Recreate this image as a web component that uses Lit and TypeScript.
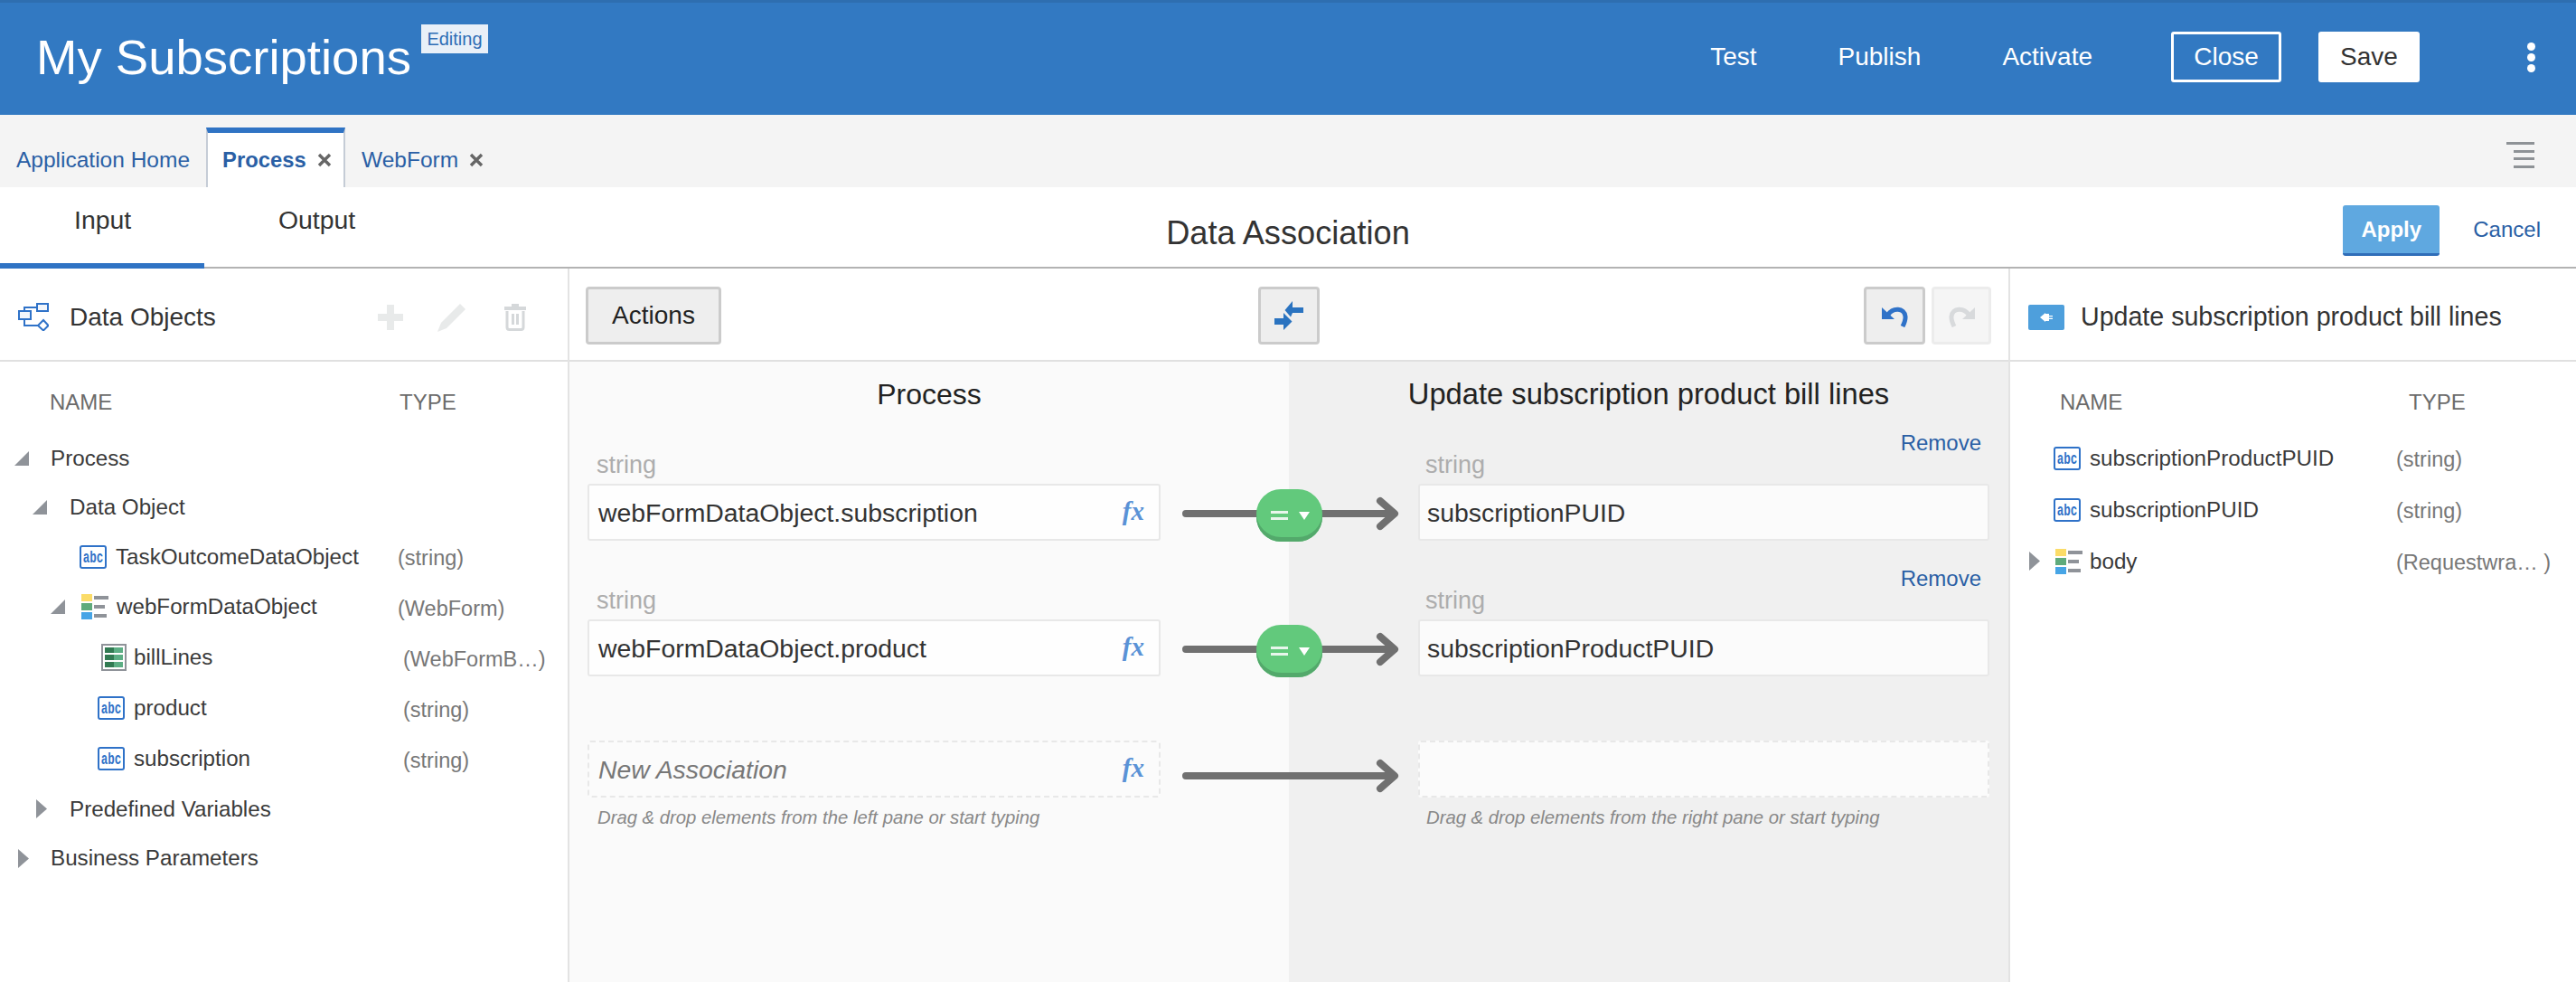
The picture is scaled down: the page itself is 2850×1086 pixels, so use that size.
import { LitElement, html, css, svg } from "lit";
import { customElement } from "lit/decorators.js";

interface TreeRow {
  label: string;
  type?: string;
  typeX?: number;
  caret?: "open" | "closed";
  caretX?: number;
  icon?: "abc" | "list" | "grid";
  iconX?: number;
  textX: number;
  h: number;
}

const LEFT_TREE: TreeRow[] = [
  { label: "Process", caret: "open", caretX: 16, textX: 56, h: 54 },
  { label: "Data Object", caret: "open", caretX: 36, textX: 77, h: 54 },
  { label: "TaskOutcomeDataObject", type: "(string)", typeX: 440, icon: "abc", iconX: 88, textX: 128, h: 55 },
  { label: "webFormDataObject", type: "(WebForm)", typeX: 440, caret: "open", caretX: 56, icon: "list", iconX: 90, textX: 129, h: 56 },
  { label: "billLines", type: "(WebFormB…)", typeX: 446, icon: "grid", iconX: 112, textX: 148, h: 56 },
  { label: "product", type: "(string)", typeX: 446, icon: "abc", iconX: 108, textX: 148, h: 56 },
  { label: "subscription", type: "(string)", typeX: 446, icon: "abc", iconX: 108, textX: 148, h: 56 },
  { label: "Predefined Variables", caret: "closed", caretX: 40, textX: 77, h: 55 },
  { label: "Business Parameters", caret: "closed", caretX: 20, textX: 56, h: 54 },
];

const RIGHT_TREE: TreeRow[] = [
  { label: "subscriptionProductPUID", type: "(string)", typeX: 427, icon: "abc", iconX: 48, textX: 88, h: 57 },
  { label: "subscriptionPUID", type: "(string)", typeX: 427, icon: "abc", iconX: 48, textX: 88, h: 57 },
  { label: "body", type: "(Requestwra… )", typeX: 427, caret: "closed", caretX: 21, icon: "list", iconX: 50, textX: 88, h: 57 },
];

const abcIcon = html`<svg width="30" height="26" viewBox="0 0 30 26">
  <rect x="1" y="1" width="28" height="24" rx="2" fill="#fff" stroke="#2f72c8" stroke-width="2"></rect>
  <text transform="translate(15 19) scale(1 1.5)" text-anchor="middle"
    font-family="Liberation Mono, monospace" font-weight="700" font-size="12.500" fill="#2f72c8">abc</text>
</svg>`;

const listIcon = html`<svg width="30" height="28" viewBox="0 0 30 28">
  <rect x="0" y="0" width="12" height="8" fill="#fbdc68"></rect>
  <rect x="0" y="10" width="12" height="8" fill="#5fab7c"></rect>
  <rect x="0" y="20" width="12" height="8" fill="#47a5e6"></rect>
  <rect x="14" y="2" width="16" height="4" fill="#8f9399"></rect>
  <rect x="14" y="12" width="12" height="4" fill="#8f9399"></rect>
  <rect x="14" y="22" width="14" height="4" fill="#8f9399"></rect>
</svg>`;

const gridIcon = html`<svg width="28" height="30" viewBox="0 0 28 30">
  <rect x="1" y="1" width="26" height="28" fill="#fff" stroke="#8f9399" stroke-width="2"></rect>
  ${[4, 12, 20].map(
    (y) => svg`<rect x="4" y=${y} width="10" height="6" fill="#317a52"></rect>
      <rect x="14" y=${y} width="10" height="6" fill="#5cae84"></rect>`,
  )}
</svg>`;

const icons = { abc: abcIcon, list: listIcon, grid: gridIcon };

const caretOpen = html`<svg width="16" height="16" viewBox="0 0 16 16"><path d="M16 0V16H0Z" fill="#8f9399"></path></svg>`;
const caretClosed = html`<svg width="12" height="21" viewBox="0 0 12 21"><path d="M0 0L12 10.5L0 21Z" fill="#8f9399"></path></svg>`;

const closeX = html`<svg class="x" width="16" height="16" viewBox="0 0 16 16">
  <path d="M2 2L14 14M14 2L2 14" stroke="#666" stroke-width="3.4" fill="none"></path>
</svg>`;

const undoShape = (fill: string) => svg`
  <path d="M7 12C12 4 25 4 26 14C26.400 18 25 21 23 25" fill="none" stroke=${fill} stroke-width="5"></path>
  <path d="M0 4V17H14Z" fill=${fill}></path>`;

function arrow(y: number) {
  return html`<svg class="arrow" width="285" height="63" viewBox="0 0 285 63">
    <path d="M28 ${y}H255M243 ${y - 14}L259 ${y}L243 ${y + 14}" fill="none" stroke="#707070" stroke-width="8"
      stroke-linecap="round" stroke-linejoin="round"></path>
  </svg>`;
}

function renderTree(rows: TreeRow[]) {
  return rows.map((r) => {
    const start = r.caretX ?? r.iconX ?? r.textX;
    const afterCaret = r.iconX ?? r.textX;
    return html`<div class="row" style="height:${r.h}px;padding-left:${start}px">
      <div class="name" style="width:${(r.typeX ?? 600) - start}px">
        ${r.caret
          ? html`<span class="slot" style="width:${afterCaret - start}px">${r.caret === "open" ? caretOpen : caretClosed}</span>`
          : ""}
        ${r.icon ? html`<span class="slot" style="width:${r.textX - (r.iconX ?? 0)}px">${icons[r.icon]}</span>` : ""}
        <span>${r.label}</span>
      </div>
      ${r.type ? html`<span class="type">${r.type}</span>` : ""}
    </div>`;
  });
}

@customElement("app-root")
export class AppRoot extends LitElement {
  static styles = css`
    :host {
      display: flex;
      flex-direction: column;
      height: 1086px;
      overflow: hidden;
      background: #fff;
      color: #333;
      font-family: "Liberation Sans", Arial, sans-serif;
    }

    .app-header {
      height: 127px;
      flex: none;
      box-sizing: border-box;
      display: flex;
      align-items: center;
      padding: 0 45px 4px 40px;
      background: #3279c2;
      border-top: 3px solid #2e6eb0;
      color: #fff;
    }
    .title {
      font-size: 54.500px;
      margin-top: 0;
    }
    .badge {
      align-self: flex-start;
      margin: 24px 0 0 11px;
      height: 32px;
      width: 74px;
      box-sizing: border-box;
      background: #e9f0f8;
      color: #2f6db5;
      font-size: 20px;
      line-height: 32px;
      text-align: center;
    }
    .actions {
      margin-left: auto;
      display: flex;
      align-items: center;
      font-size: 28px;
    }
    .actions .link {
      margin-right: 90px;
    }
    .actions .link:nth-child(3) {
      margin-right: 87px;
    }
    .btn-head {
      box-sizing: border-box;
      height: 56px;
      line-height: 50px;
      border: 3px solid #fff;
      border-radius: 3px;
      text-align: center;
    }
    .btn-close {
      width: 122px;
    }
    .btn-save {
      width: 112px;
      margin-left: 41px;
      background: #fff;
      color: #333;
    }
    .kebab {
      margin-left: 119px;
      display: flex;
      flex-direction: column;
      gap: 3px;
    }
    .kebab i {
      width: 9px;
      height: 9px;
      border-radius: 50%;
      background: #fff;
    }

    .tabs {
      height: 80px;
      flex: none;
      display: flex;
      align-items: flex-end;
      background: #f4f4f4;
      font-size: 24.500px;
      color: #2a5fa5;
      padding-right: 46px;
    }
    .tab {
      box-sizing: border-box;
      height: 66px;
      border-top: 6px solid transparent;
      display: flex;
      align-items: center;
      padding: 0 18px;
    }
    .tab.active {
      width: 154px;
      padding: 0 0 0 16px;
      border-top-color: #2f73c4;
      border-left: 2px solid #c5ccd6;
      border-right: 2px solid #c5ccd6;
      background: #fff;
      font-size: 23.800px;
      font-weight: 700;
    }
    .x {
      margin-left: 12px;
    }
    .lines {
      margin-left: auto;
      align-self: flex-start;
      margin-top: 30px;
      width: 31px;
      display: flex;
      flex-direction: column;
      align-items: flex-end;
      gap: 5.500px;
    }
    .lines i {
      width: 23px;
      height: 3px;
      background: #8e9296;
    }
    .lines i:first-child {
      width: 31px;
    }

    .subbar {
      height: 90px;
      flex: none;
      box-sizing: border-box;
      display: grid;
      grid-template-columns: 1fr auto 1fr;
      border-bottom: 2px solid #b3b3b3;
    }
    .subtabs {
      display: flex;
      font-size: 28.400px;
      color: #333;
    }
    .subtab {
      box-sizing: border-box;
      width: 226px;
      height: 90px;
      padding: 20px 0 0 82px;
    }
    .subtab.active {
      border-bottom: 6px solid #2f73c4;
    }
    .subtitle {
      font-size: 36.200px;
      color: #333;
      padding-top: 30px;
    }
    .subactions {
      display: flex;
      justify-content: flex-end;
      align-items: flex-start;
      gap: 37px;
      padding: 20px 39px 0 0;
      font-size: 24px;
      color: #2a5fa5;
    }
    .apply {
      box-sizing: border-box;
      width: 107px;
      height: 56px;
      line-height: 53px;
      text-align: center;
      background: #5fa8e0;
      border-bottom: 3px solid #2f6db8;
      border-radius: 3px;
      color: #fff;
      font-weight: 700;
    }
    .cancel {
      line-height: 54px;
    }

    .body {
      flex: 1;
      min-height: 0;
      display: grid;
      grid-template-columns: 630px 1592px 628px;
    }
    .panel-left {
      box-sizing: border-box;
      border-right: 2px solid #e3e3e3;
    }
    .panel-right {
      box-sizing: border-box;
      border-left: 2px solid #e3e3e3;
    }
    .toolbar {
      box-sizing: border-box;
      height: 103px;
      border-bottom: 2px solid #e0e0e0;
      display: flex;
      align-items: center;
      font-size: 28px;
      color: #333;
    }
    .panel-left .toolbar {
      padding: 6px 0 0 20px;
    }
    .toolbar .head-text {
      margin-left: 23px;
    }
    .tools {
      margin-left: 179px;
      display: flex;
      align-items: center;
      gap: 38px;
    }
    .tools .trash {
      margin-left: 4px;
    }
    .panel-right .toolbar {
      padding: 6px 0 0 20px;
    }
    .service {
      width: 40px;
      height: 28px;
      margin-right: 18px;
      border-radius: 2px;
      background: #4e9fdc;
      display: flex;
      align-items: center;
      justify-content: center;
    }
    .service-name {
      font-size: 28.600px;
    }

    .colhead {
      display: flex;
      font-size: 24px;
      color: #6b6b6b;
      height: 80px;
      box-sizing: border-box;
      padding-top: 9px;
      align-items: center;
    }
    .panel-right .colhead {
      height: 78px;
      padding-top: 11px;
    }
    .tree .row {
      box-sizing: border-box;
      display: flex;
      align-items: center;
      font-size: 24.200px;
      white-space: nowrap;
      color: #3a3a3a;
    }
    .name {
      flex: none;
      box-sizing: border-box;
      display: flex;
      align-items: center;
    }
    .slot {
      flex: none;
      display: flex;
      align-items: center;
    }
    .type {
      color: #777;
      padding-top: 4px;
      font-size: 23.500px;
    }

    .mid {
      display: flex;
      flex-direction: column;
      min-width: 0;
    }
    .mid-bar {
      box-sizing: border-box;
      height: 103px;
      border-bottom: 2px solid #e0e0e0;
      display: grid;
      grid-template-columns: 1fr auto 1fr;
      align-items: center;
      padding: 2px 19px 0 18px;
    }
    .tbtn {
      box-sizing: border-box;
      height: 64px;
      width: 68px;
      background: #eee;
      border: 3px solid #cbcbcb;
      border-radius: 4px;
      display: flex;
      align-items: center;
      justify-content: center;
      font-size: 28px;
      color: #222;
    }
    .tbtn.text {
      width: 150px;
    }
    .tbtn.off {
      width: 66px;
      background: #f5f5f5;
      border-color: #ececec;
    }
    .group {
      display: flex;
      justify-content: flex-end;
      gap: 7px;
    }

    .map {
      flex: 1;
      background: linear-gradient(90deg, #fafafa 50%, #f0f0f0 50%);
    }
    .heads {
      display: grid;
      grid-template-columns: 1fr 1fr;
      height: 75px;
      font-size: 32px;
      color: #222;
      text-align: center;
      line-height: 72px;
    }
    .heads .wide {
      font-size: 32.700px;
    }
    .assocs {
      display: grid;
      grid-template-columns: 634px 285px 632px;
      grid-template-rows: 123px 150px 134px auto;
      align-items: end;
      padding: 0 21px 0 20px;
    }
    .field {
      display: flex;
      flex-direction: column;
    }
    .remove {
      align-self: flex-end;
      margin-right: 9px;
      font-size: 24px;
      line-height: 26px;
      color: #2a5fa5;
    }
    .dtype {
      font-size: 27px;
      color: #adadad;
      line-height: 23px;
      height: 32px;
      padding-left: 8px;
    }
    .left .dtype {
      padding-left: 10px;
    }
    .input {
      box-sizing: border-box;
      height: 63px;
      display: flex;
      align-items: center;
      justify-content: space-between;
      padding: 2px 16px 0 10px;
      border: 2px solid #e8e8e8;
      border-radius: 3px;
      background: #fefefe;
      font-size: 28.400px;
      color: #333;
    }
    .input.target {
      background: #fbfbfb;
      padding-left: 8px;
    }
    .input.new {
      border-style: dashed;
      background: #fbfbfb;
    }
    .placeholder {
      font-style: italic;
      color: #777;
    }
    .fx {
      font-family: "Liberation Serif", serif;
      font-style: italic;
      font-weight: 700;
      font-size: 29px;
      color: #5a92d6;
      padding-bottom: 5px;
    }
    .conn {
      position: relative;
      height: 63px;
    }
    .arrow {
      display: block;
    }
    .pill {
      position: absolute;
      left: 106px;
      top: 6px;
      box-sizing: border-box;
      width: 73px;
      height: 58px;
      border-radius: 27px;
      background: #62c97c;
      box-shadow: inset 0 -5px 0 #53a96b;
      display: flex;
      align-items: center;
      padding-left: 16px;
      gap: 12px;
    }
    .eq {
      width: 19px;
      height: 10px;
      border-top: 3.500px solid #e8f6ec;
      border-bottom: 3.500px solid #e8f6ec;
      box-sizing: border-box;
    }
    .tri {
      width: 0;
      height: 0;
      border-left: 6px solid transparent;
      border-right: 6px solid transparent;
      border-top: 9px solid #fff;
    }
    .hint {
      align-self: start;
      padding: 11px 0 0 11px;
      font-size: 20.300px;
      font-style: italic;
      color: #888;
      white-space: nowrap;
    }
    .hint.right {
      padding-left: 9px;
    }
  `;

  render() {
    return html`
      <header class="app-header">
        <div class="title">My Subscriptions</div>
        <div class="badge">Editing</div>
        <div class="actions">
          <span class="link">Test</span>
          <span class="link">Publish</span>
          <span class="link">Activate</span>
          <div class="btn-head btn-close">Close</div>
          <div class="btn-head btn-save">Save</div>
          <div class="kebab"><i></i><i></i><i></i></div>
        </div>
      </header>

      <nav class="tabs">
        <div class="tab">Application Home</div>
        <div class="tab active">Process${closeX}</div>
        <div class="tab">WebForm${closeX}</div>
        <div class="lines"><i></i><i></i><i></i><i></i></div>
      </nav>

      <div class="subbar">
        <div class="subtabs">
          <div class="subtab active">Input</div>
          <div class="subtab">Output</div>
        </div>
        <div class="subtitle">Data Association</div>
        <div class="subactions">
          <div class="apply">Apply</div>
          <div class="cancel">Cancel</div>
        </div>
      </div>

      <div class="body">
        <section class="panel-left">
          <div class="toolbar">
            <svg width="34" height="31" viewBox="0 0 34 31" fill="none" stroke="#2f72c8" stroke-width="2">
              <rect x="21" y="1" width="12" height="8" fill="#f3f6fb"></rect>
              <rect x="1" y="9" width="13" height="9" fill="#f3f6fb"></rect>
              <path d="M21 5H7V9M7 18V25H22"></path>
              <path d="M28 19L33.500 25L28 30.500L22 25Z" fill="#fff"></path>
            </svg>
            <span class="head-text">Data Objects</span>
            <div class="tools">
              <svg width="28" height="28" viewBox="0 0 28 28"><path d="M10 0H18V10H28V18H18V28H10V18H0V10H10Z" fill="#e8eaea"></path></svg>
              <svg width="32" height="32" viewBox="0 0 32 32"><path d="M25 1L31 7L10 28L0 32L4 22Z" fill="#e8eaea"></path></svg>
              <svg class="trash" width="24" height="30" viewBox="0 0 24 30" fill="none" stroke="#d5d8da" stroke-width="3">
                <path d="M0 5H24" stroke-width="4"></path><path d="M8 2H16" stroke-width="4"></path>
                <path d="M3 8V26Q3 28.500 5.500 28.500H18.500Q21 28.500 21 26V8"></path><path d="M9.500 11V23M14.500 11V23"></path>
              </svg>
            </div>
          </div>
          <div class="colhead"><span style="margin-left:55px;width:387px">NAME</span><span>TYPE</span></div>
          <div class="tree">${renderTree(LEFT_TREE)}</div>
        </section>

        <section class="mid">
          <div class="mid-bar">
            <div class="tbtn text">Actions</div>
            <div class="tbtn">
              <svg width="32" height="32" viewBox="0 0 32 32" fill="#2a73c0">
                <path d="M20 0L11.500 10L18 17.500L20 13H32V7H20Z"></path>
                <path d="M0 19H10V13L19.500 22.500L10 32V26H0Z"></path>
              </svg>
            </div>
            <div class="group">
              <div class="tbtn"><svg width="29" height="26" viewBox="0 0 29 26">${undoShape("#2f72c8")}</svg></div>
              <div class="tbtn off">
                <svg width="29" height="26" viewBox="0 0 29 26" style="transform:scaleX(-1)">${undoShape("#d8dadc")}</svg>
              </div>
            </div>
          </div>
          <div class="map">
            <div class="heads"><div>Process</div><div class="wide">Update subscription product bill lines</div></div>
            <div class="assocs">
              <div class="field left">
                <div class="dtype">string</div>
                <div class="input">webFormDataObject.subscription<span class="fx">fx</span></div>
              </div>
              <div class="conn">${arrow(33)}<div class="pill"><span class="eq"></span><span class="tri"></span></div></div>
              <div class="field">
                <div class="remove">Remove</div>
                <div class="dtype">string</div>
                <div class="input target">subscriptionPUID</div>
              </div>

              <div class="field left">
                <div class="dtype">string</div>
                <div class="input">webFormDataObject.product<span class="fx">fx</span></div>
              </div>
              <div class="conn">${arrow(33)}<div class="pill"><span class="eq"></span><span class="tri"></span></div></div>
              <div class="field">
                <div class="remove">Remove</div>
                <div class="dtype">string</div>
                <div class="input target">subscriptionProductPUID</div>
              </div>

              <div class="input new"><span class="placeholder">New Association</span><span class="fx">fx</span></div>
              <div class="conn">${arrow(39)}</div>
              <div class="input new"></div>

              <div class="hint">Drag &amp; drop elements from the left pane or start typing</div>
              <div></div>
              <div class="hint right">Drag &amp; drop elements from the right pane or start typing</div>
            </div>
          </div>
        </section>

        <section class="panel-right">
          <div class="toolbar">
            <div class="service">
              <svg width="14" height="10" viewBox="0 0 14 10" fill="#fff">
                <path d="M0 5L6 0V1H10V3H14V4.200H10V5.800H14V7H10V9H6V10Z"></path>
              </svg>
            </div>
            <span class="service-name">Update subscription product bill lines</span>
          </div>
          <div class="colhead"><span style="margin-left:55px;width:386px">NAME</span><span>TYPE</span></div>
          <div class="tree">${renderTree(RIGHT_TREE)}</div>
        </section>
      </div>
    `;
  }
}
